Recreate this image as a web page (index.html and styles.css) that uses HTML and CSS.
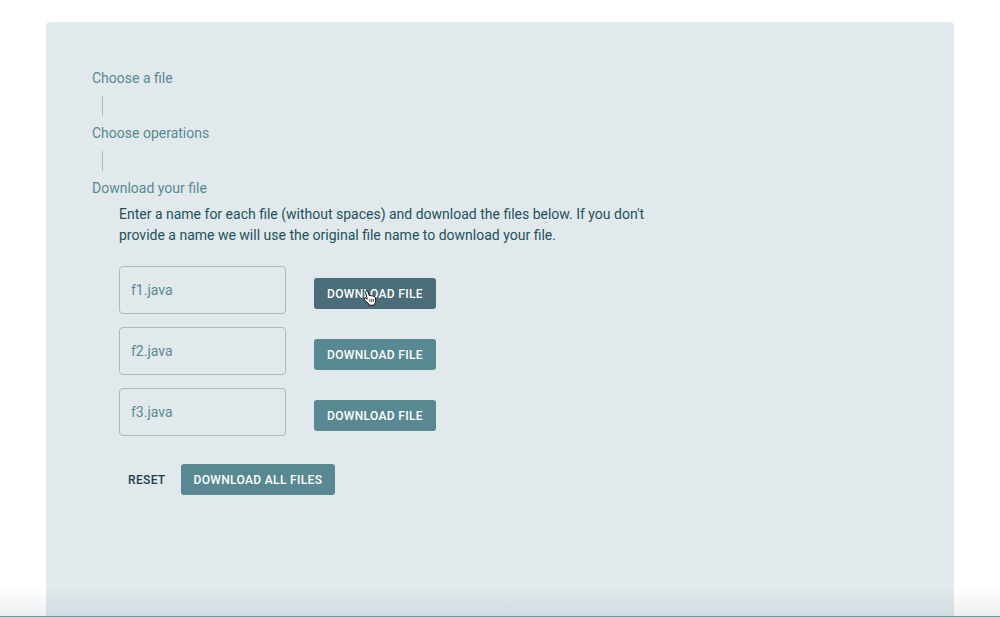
FILE: index.html
```html
<!DOCTYPE html>
<html lang="en">
<head>
<meta charset="utf-8">
<meta name="viewport" content="width=device-width, initial-scale=1">
<title>Download your file</title>
<link rel="stylesheet" href="styles.css">
</head>
<body>
<main class="panel">
  <div class="step">Choose a file</div>
  <div class="connector"></div>
  <div class="step">Choose operations</div>
  <div class="connector"></div>
  <div class="step">Download your file</div>
  <form class="content">
    <p class="intro">Enter a name for each file (without spaces) and download the files below. If you don't provide a name we will use the original file name to download your file.</p>
    <div class="files">
      <div class="file-row">
        <input class="field" type="text" placeholder="f1.java" aria-label="Name for f1.java">
        <button class="button button-active" type="button">DOWNLOAD FILE
          <svg class="pointer" viewBox="0 0 14 16" aria-hidden="true"><path d="M4.2 9.2L2.6 2.4Q2.4 1 3.5.8T5 1.9L6.2 5.5Q7.4 4.8 8.1 5.9 9.5 5.2 10.1 6.3 12 5.8 12.4 7.8L12.7 10.5Q12.8 12.5 11.6 13.6V15.2H5.8V14L2.2 10.4Q.6 8.8 1.4 8T4.2 9.2Z" fill="#fff" stroke="#111"/><path d="M6.8 9V12M8.6 9V12M10.3 9V12" stroke="#222" stroke-width=".8"/></svg>
        </button>
      </div>
      <div class="file-row">
        <input class="field" type="text" placeholder="f2.java" aria-label="Name for f2.java">
        <button class="button" type="button">DOWNLOAD FILE</button>
      </div>
      <div class="file-row">
        <input class="field" type="text" placeholder="f3.java" aria-label="Name for f3.java">
        <button class="button" type="button">DOWNLOAD FILE</button>
      </div>
    </div>
    <div class="actions">
      <button class="button button-text" type="reset">RESET</button>
      <button class="button" type="button">DOWNLOAD ALL FILES</button>
    </div>
  </form>
</main>
<div class="page-fade"></div>
</body>
</html>
```
FILE: styles.css
```css
* {
  box-sizing: border-box;
}

body {
  margin: 0;
  background: #fff;
  color: #22515d;
  font: 14px/21px Roboto, "Liberation Sans", sans-serif;
}

.panel {
  min-height: calc(100vh - 22px);
  margin: 22px 46px 0;
  padding: 46px;
  border-radius: 4px 4px 0 0;
  background: #e1e9ec;
}

.step {
  line-height: 20px;
  color: #588993;
}

.connector {
  height: 20px;
  margin: 8px 0 7px 10px;
  border-left: 1px solid #a9bfc5;
}

.content {
  margin: 6px 0 0 27px;
}

.intro {
  max-width: 540px;
  margin: 0;
}

.files {
  display: flex;
  flex-direction: column;
  gap: 13px;
  margin-top: 20px;
}

.file-row {
  display: flex;
  align-items: center;
  gap: 28px;
}

.field {
  width: 167px;
  height: 48px;
  padding: 0 11px;
  border: 1px solid #a9bbc1;
  border-radius: 4px;
  background: transparent;
  color: #22515d;
  font: inherit;
}

.field::placeholder {
  color: #588993;
  opacity: 1;
}

.button {
  position: relative;
  height: 31px;
  padding: 0 13px;
  border: 0;
  border-radius: 3px;
  background: #588993;
  color: #fff;
  font: 500 12px/20px Roboto, "Liberation Sans", sans-serif;
  letter-spacing: 0.02857em;
  white-space: nowrap;
}

.file-row .button {
  margin-top: 7px;
}

.button-active {
  background: #4b6d79;
}

.button-text {
  padding: 0 9px;
  background: transparent;
  color: #163f4b;
}

.pointer {
  position: absolute;
  top: 12px;
  left: 49px;
  width: 14px;
  height: 16px;
}

.actions {
  display: flex;
  gap: 6px;
  margin-top: 28px;
}

.page-fade {
  position: fixed;
  right: 0;
  bottom: 0;
  left: 0;
  height: 27px;
  border-bottom: 1px solid #6f979e;
  background: linear-gradient(rgba(110, 140, 165, 0.02), rgba(110, 130, 145, 0.12));
  pointer-events: none;
}
```
